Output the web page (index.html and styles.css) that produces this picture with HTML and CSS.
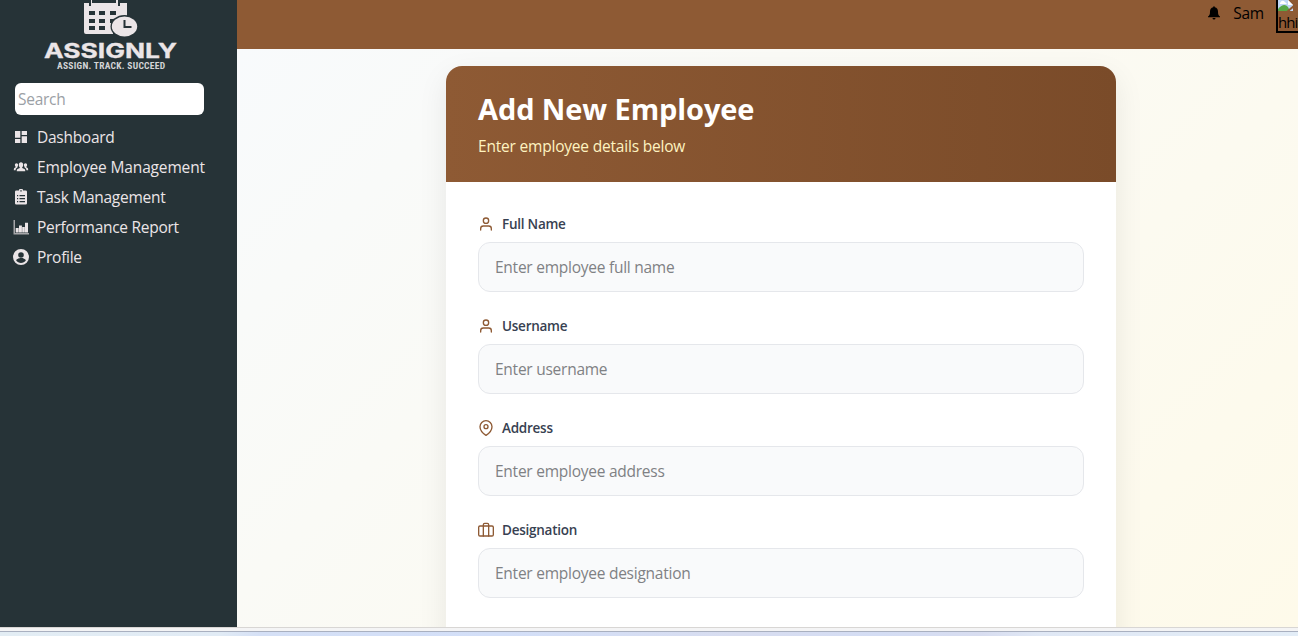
FILE: index.html
```html
<!DOCTYPE html>
<html lang="en">
<head>
<meta charset="utf-8">
<title>Assignly - Add New Employee</title>
<link rel="stylesheet" href="styles.css">
</head>
<body>
<div class="app">
  <aside class="sidebar">
    <svg class="logo" width="140" height="74" viewBox="0 0 140 74">
      <path fill="#ebe5e7" d="M44 3h5V0h3v3h24V0h3v3h8v14a15 15 0 0 0-14 17H46q-2 0-2-2z"/>
      <path fill="#263337" d="M49 0h2v6h-2zM78 0h2v6h-2zM49 11h6v4h-6zm10 0h6v4h-6zm11 0h6v4h-6zM49 19h6v4h-6zm10 0h6v4h-6zM49 26h6v4h-6zm10 0h6v4h-6zM70 19h6v4h-6z"/>
      <ellipse cx="84.500" cy="26.500" rx="14" ry="11.500" fill="#263337"/>
      <ellipse cx="84.500" cy="26.500" rx="12.700" ry="10" fill="#ebe5e7"/>
      <path d="M84.500 20v7h7" fill="none" stroke="#263337" stroke-width="2"/>
      <text class="logo-name" x="4" y="58" textLength="133" lengthAdjust="spacingAndGlyphs">ASSIGNLY</text>
      <text class="logo-tag" x="17" y="69" textLength="108">ASSIGN. TRACK. SUCCEED</text>
    </svg>
    <input class="search" placeholder="Search">
    <nav class="menu">
      <a class="item"><svg width="16" height="16" viewBox="0 0 24 24"><path d="M3 13h8V3H3v10zm0 8h8v-6H3v6zm10 0h8V11h-8v10zm0-18v6h8V3h-8z"/></svg><span>Dashboard</span></a>
      <a class="item"><svg width="16" height="16" viewBox="0 0 16 16"><path d="M8 3.300c1.400 0 2.200 1 2.200 2.400 0 1.200-.4 2.100-1 2.600v.8l2.300.9q.8.400.8 2.300H3.700q0-1.900.8-2.300l2.300-.9v-.8c-.6-.5-1-1.400-1-2.600 0-1.400.8-2.400 2.200-2.400zM3.500 4.300c1 0 1.600.7 1.600 1.800 0 .9-.3 1.400-.7 1.800v.7l-1 .7q-.8.400-.8 2H.8q0-2 .5-2.300l1.400-.7v-.5C2.200 7.400 1.900 7 1.900 6.100c0-1.100.6-1.800 1.600-1.800zM12.500 4.300c-1 0-1.600.7-1.600 1.800 0 .9.300 1.400.7 1.800v.7l1 .7q.8.400.8 2h1.800q0-2-.5-2.300l-1.400-.7v-.5c.5-.4.8-.8.800-1.700 0-1.100-.6-1.800-1.600-1.800z"/></svg><span class="wide">Employee Management</span></a>
      <a class="item"><svg width="16" height="16" viewBox="0 0 16 16"><path fill-rule="evenodd" d="M3.300 1.500H6a2 2 0 0 1 4 0h2.700q1.300 0 1.300 1.300v11.400q0 1.300-1.300 1.300H3.300Q2 15.500 2 14.200V2.800q0-1.300 1.300-1.300zM7.300 1.300v1.200h1.400V1.300zM4 6v1.200h1.200V6zm2.500 0v1.200H12V6zM4 9v1.200h1.200V9zm2.500 0v1.200H12V9zM4 12v1.200h1.200V12zm2.500 0v1.200H12V12z"/></svg><span>Task Management</span></a>
      <a class="item"><svg width="16" height="16" viewBox="0 0 16 16"><path opacity=".65" d="M.5 1H2v13h14v1.500H.5z"/><path d="M2.700 9h3v4.500h-3zm3.300-2.500h2.900v7H6zM9.200 8h2.600v5.500H9.200zM12 3.800h3v9.700h-3z"/></svg><span>Performance Report</span></a>
      <a class="item"><svg width="16" height="16" viewBox="2 2 20 20"><path d="M12 2a10 10 0 1 0 0 20 10 10 0 0 0 0-20zm0 4a3.500 3.500 0 1 1 0 7 3.500 3.500 0 0 1 0-7zm0 13.500c-2.500 0-4.700-1.200-6-3.100.1-1.900 4-3 6-3s5.900 1.100 6 3c-1.300 1.900-3.500 3.100-6 3.100z"/></svg><span>Profile</span></a>
    </nav>
  </aside>
  <div class="content">
    <header class="topbar">
      <svg class="bell" width="12" height="14" viewBox="0 0 12 14"><path d="M5.200 1a.8.800 0 0 1 1.600 0v.3C9 1.700 10 3.500 10 5.500c0 3 .5 4 2 5v.8H0v-.8c1.500-1 2-2 2-5 0-2 1-3.800 3.200-4.200zM4.500 12h3a1.500 1.500 0 0 1-3 0z"/></svg>
      <span class="user">Sam</span>
      <div class="avatar">
        <svg width="16" height="12" viewBox="0 0 16 12"><path fill="#c2d7f5" d="M0 0h10l5 5v6H0z"/><path fill="#fff" d="M2 3q2-4 5-1l2 2H2zM10 0v5h5z"/><path fill="#57a846" d="M0 11V9q6-7 10-2l2 4z"/><path stroke="#8e5a34" stroke-width="2" d="M9 12l8-7"/></svg>
        <span>hhi</span>
      </div>
    </header>
    <main class="page">
      <section class="card">
        <div class="card-head">
          <h1>Add New Employee</h1>
          <p>Enter employee details below</p>
        </div>
        <form class="form">
          <div class="field">
            <label><svg class="icon" viewBox="0 0 24 24"><path d="M20 21v-2a4 4 0 0 0-4-4H8a4 4 0 0 0-4 4v2"/><circle cx="12" cy="7" r="4"/></svg><span>Full Name</span></label>
            <input placeholder="Enter employee full name">
          </div>
          <div class="field">
            <label><svg class="icon" viewBox="0 0 24 24"><path d="M20 21v-2a4 4 0 0 0-4-4H8a4 4 0 0 0-4 4v2"/><circle cx="12" cy="7" r="4"/></svg><span>Username</span></label>
            <input placeholder="Enter username">
          </div>
          <div class="field">
            <label><svg class="icon" viewBox="0 0 24 24"><path d="M21 10c0 7-9 13-9 13s-9-6-9-13a9 9 0 0 1 18 0z"/><circle cx="12" cy="10" r="3"/></svg><span>Address</span></label>
            <input placeholder="Enter employee address">
          </div>
          <div class="field">
            <label><svg class="icon" viewBox="0 0 24 24"><rect x="1" y="6" width="22" height="15" rx="2"/><path d="M16 21V4a2 2 0 0 0-2-2h-4a2 2 0 0 0-2 2v17"/></svg><span>Designation</span></label>
            <input placeholder="Enter employee designation">
          </div>
        </form>
      </section>
    </main>
  </div>
</div>
<div class="taskbar"></div>
</body>
</html>
```
FILE: styles.css
```css
* { box-sizing: border-box; }
body {
  margin: 0;
  height: 636px;
  overflow: hidden;
  font: 16px/24px "Open Sans", "Noto Sans", sans-serif;
}
.app { display: flex; height: 627px; overflow: hidden; }
.sidebar { width: 237px; flex: none; background: #263337; }
.logo { display: block; margin-left: 40px; }
.logo-name { font: 700 20px Inter, sans-serif; fill: #ebe5e7; stroke: #ebe5e7; stroke-width: 0.3px; }
.logo-tag { font: 700 9.5px "Liberation Sans Narrow", Roboto, sans-serif; font-stretch: condensed; fill: #d3d4d6; }
.search {
  display: block;
  width: 189px;
  height: 32px;
  margin: 9px 0 0 15px;
  padding: 0 3px;
  border: 0;
  border-radius: 6px;
  background: #fff;
  font: 15.5px "Open Sans", sans-serif;
  letter-spacing: -0.28px;
}
.search::placeholder { color: #9ba0a5; }
.menu { display: flex; flex-direction: column; padding: 7px 0 0 13px; }
.item {
  display: flex;
  align-items: center;
  gap: 8px;
  height: 30px;
  color: #ebe5e7;
  font-size: 15.5px;
  letter-spacing: -0.28px;
  white-space: nowrap;
}
.wide { letter-spacing: -0.15px; }
.item svg { fill: #ebe5e7; flex: none; }
.content { flex: 1; display: flex; flex-direction: column; min-width: 0; }
.topbar {
  height: 49px;
  flex: none;
  display: flex;
  align-items: flex-start;
  justify-content: flex-end;
  overflow: hidden;
  background: #8e5a34;
  color: #000;
}
.bell { margin: 6px 13px 0 0; }
.user { margin: 1px 12px 0 0; font-size: 15.5px; letter-spacing: -0.2px; }
.avatar {
  width: 22px;
  height: 33px;
  border: 2px solid #000;
  border-width: 0 0 2px 2px;
  overflow: hidden;
  font-size: 15px;
  letter-spacing: -0.9px;
  line-height: 21px;
  flex: none;
}
.avatar svg { display: block; }
.page {
  flex: 1;
  display: flex;
  justify-content: center;
  align-items: flex-start;
  padding: 17px 0 0 27px;
  overflow: hidden;
  background: linear-gradient(135deg, #f8fafc, #fefaea);
}
.card {
  width: 670px;
  height: 720px;
  flex: none;
  border-radius: 16px;
  overflow: hidden;
  background: #fff;
  box-shadow: 0 10px 30px rgba(0, 0, 0, 0.08);
}
.card-head {
  height: 116px;
  padding: 24px 32px;
  background: linear-gradient(90deg, #8e5a34, #7a4b29);
}
h1 { margin: 0; color: #fff; font-size: 29px; line-height: 38px; font-weight: 700; letter-spacing: -0.1px; white-space: nowrap; }
.card-head p { margin: 6px 0 0; color: #fef3c0; font-size: 15.5px; letter-spacing: -0.2px; line-height: 24px; }
.form { display: flex; flex-direction: column; gap: 24px; padding: 32px; }
.field { display: flex; flex-direction: column; gap: 8px; }
.field label {
  display: flex;
  align-items: center;
  gap: 8px;
  height: 20px;
  color: #374151;
  font-size: 13.5px;
  letter-spacing: -0.25px;
  font-weight: 600;
}
.icon { width: 16px; height: 16px; fill: none; stroke: #8e5a34; stroke-width: 2; stroke-linecap: round; stroke-linejoin: round; }
.field input {
  height: 50px;
  padding: 0 16px;
  border: 1px solid #e5e7eb;
  border-radius: 12px;
  background: #f9fafb;
  font: 15.5px "Open Sans", sans-serif;
  letter-spacing: -0.25px;
}
.field input::placeholder { color: #7f8184; }
.taskbar {
  height: 9px;
  border-top: 1px solid #d8d6d4;
  background: linear-gradient(#f4f4f5 0 3px, #a9b0c0 3px 4px, transparent 4px), linear-gradient(90deg, #e3edf4 0, #e1ebf5 220px, #d5e0f6 260px, #d3dff8 500px, #d8ddf0 740px, #d4ddf4 880px, #d8ddf0 980px, #e0e8f5 1040px, #e3edf7);
}
```
